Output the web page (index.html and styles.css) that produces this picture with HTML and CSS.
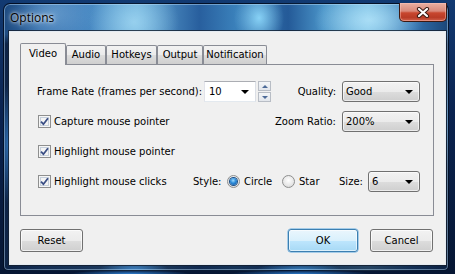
FILE: index.html
```html
<!DOCTYPE html>
<html>
<head>
<meta charset="utf-8">
<link rel="stylesheet" href="styles.css">
</head>
<body>
<div class="window">
  <div class="titlebar">
    <span class="title">Options</span>
    <div class="close">
      <svg width="14" height="11" viewBox="0 0 14 11">
        <path d="M3 2 L11 9 M11 2 L3 9" stroke="#3a1a14" stroke-width="4.2" stroke-linecap="round"/>
        <path d="M3 2 L11 9 M11 2 L3 9" stroke="#ffffff" stroke-width="2.2" stroke-linecap="round"/>
      </svg>
    </div>
  </div>
  <div class="client">
    <div class="tabs">
      <div class="tab tab-video selected">Video</div>
      <div class="tab tab-audio">Audio</div>
      <div class="tab tab-hotkeys">Hotkeys</div>
      <div class="tab tab-output">Output</div>
      <div class="tab tab-notif">Notification</div>
    </div>
    <div class="panel">
      <div class="row">
        <span class="fr-label">Frame Rate (frames per second):</span>
        <div class="editcombo"><span>10</span><i class="arrow"></i></div>
        <div class="spin">
          <div class="spin-btn"><i class="up"></i></div>
          <div class="spin-btn"><i class="down"></i></div>
        </div>
        <div class="right">
          <span class="rlabel">Quality:</span>
          <div class="combo combo-wide"><span>Good</span><i class="arrow"></i></div>
        </div>
      </div>
      <div class="row">
        <label class="check"><span class="cbox"><svg width="9" height="9" viewBox="0 0 9 9"><path d="M1 4.6 L3.4 7.2 L8 1.2" fill="none" stroke="#3b4f86" stroke-width="1.8"/></svg></span>Capture mouse pointer</label>
        <div class="right">
          <span class="rlabel">Zoom Ratio:</span>
          <div class="combo combo-wide"><span>200%</span><i class="arrow"></i></div>
        </div>
      </div>
      <div class="row">
        <label class="check"><span class="cbox"><svg width="9" height="9" viewBox="0 0 9 9"><path d="M1 4.6 L3.4 7.2 L8 1.2" fill="none" stroke="#3b4f86" stroke-width="1.8"/></svg></span>Highlight mouse pointer</label>
      </div>
      <div class="row">
        <label class="check check-fixed"><span class="cbox"><svg width="9" height="9" viewBox="0 0 9 9"><path d="M1 4.6 L3.4 7.2 L8 1.2" fill="none" stroke="#3b4f86" stroke-width="1.8"/></svg></span>Highlight mouse clicks</label>
        <span class="style-label">Style:</span>
        <label class="radio-opt circle-opt"><span class="radio on"></span>Circle</label>
        <label class="radio-opt star-opt"><span class="radio"></span>Star</label>
        <span class="size-label">Size:</span>
        <div class="combo combo-small"><span>6</span><i class="arrow"></i></div>
      </div>
    </div>
    <div class="buttons">
      <div class="btn btn-reset">Reset</div>
      <div class="btn btn-ok">OK</div>
      <div class="btn btn-cancel">Cancel</div>
    </div>
  </div>
</div>
</body>
</html>
```
FILE: styles.css
```css
* { box-sizing: border-box; }

html, body {
  margin: 0;
  width: 455px;
  height: 274px;
  overflow: hidden;
}

body {
  padding: 3px 0 0 3px;
  background:
    radial-gradient(ellipse 60px 4px at 130px 274px, #2f7fd0, transparent),
    radial-gradient(ellipse 70px 4px at 300px 274px, #2a78c8, transparent),
    linear-gradient(180deg, #123a72 0%, #0a2350 40%, #061633 100%);
  font-family: "DejaVu Sans", sans-serif;
  font-size: 10px;
  color: #000;
}

.window {
  width: 446px;
  height: 268px;
  border: 1px solid rgba(0, 10, 30, 0.85);
  border-radius: 7px 7px 5px 5px;
  padding: 0 2px 5px 5px;
  box-shadow: inset 0 0 0 1px rgba(190, 225, 250, 0.45);
  background:
    radial-gradient(ellipse 45px 40px at 130px 18px, rgba(160, 215, 242, 0.85), transparent),
    radial-gradient(ellipse 25px 30px at 255px 14px, rgba(140, 215, 250, 0.95), transparent),
    radial-gradient(ellipse 55px 30px at 365px 16px, rgba(175, 225, 248, 0.9), transparent),
    radial-gradient(ellipse 40px 30px at 50px 10px, rgba(120, 170, 215, 0.6), transparent),
    radial-gradient(ellipse 35px 14px at 130px 268px, rgba(70, 150, 225, 0.85), transparent),
    radial-gradient(ellipse 45px 10px at 295px 268px, rgba(70, 160, 235, 0.85), transparent),
    radial-gradient(ellipse 8px 60px at 4px 140px, rgba(60, 140, 220, 0.7), transparent),
    radial-gradient(ellipse 6px 60px at 446px 110px, rgba(60, 150, 230, 0.7), transparent),
    linear-gradient(180deg, transparent 0px, transparent 30px, rgba(5, 18, 45, 0.7) 40px, rgba(5, 18, 45, 0.7) 100%),
    linear-gradient(90deg, #1d4a80 0%, #376fab 8%, #4585c0 18%, #63a8d6 30%, #285f9e 44%, #3a80ba 52%, #245a98 64%, #4a94c8 72%, #72bae0 82%, #3373b0 92%, #1b4678 100%);
}

.titlebar {
  height: 27px;
  display: flex;
  align-items: flex-start;
}

.title {
  font-family: "Open Sans", sans-serif;
  font-size: 12px;
  line-height: 16px;
  margin: 6px 0 0 1px;
  color: #000;
  text-shadow: 0 0 6px rgba(255, 255, 255, 0.9), 0 0 3px rgba(255, 255, 255, 0.9);
}

.close {
  margin: -1px -1px 0 auto;
  width: 48px;
  height: 19px;
  border: 1px solid #3d1810;
  border-top: none;
  border-radius: 0 0 5px 5px;
  background: linear-gradient(180deg, #eab0a2 0%, #d9897a 45%, #c8472f 55%, #b83b26 80%, #d0614b 100%);
  box-shadow: inset 0 0 0 1px rgba(255, 200, 190, 0.45);
  display: flex;
  align-items: center;
  justify-content: center;
}

.client {
  height: 234px;
  background: #f0f0f0;
  border: 1px solid #e4ebf2;
  box-shadow: 0 0 0 1px rgba(20, 30, 45, 0.8);
  padding: 11px 0 0 10px;
}

.tabs {
  display: flex;
  align-items: flex-end;
  height: 21px;
  position: relative;
  z-index: 1;
}

.tab {
  height: 19px;
  border: 1px solid #898c95;
  border-bottom: none;
  border-radius: 2px 2px 0 0;
  background: linear-gradient(180deg, #f2f2f2 0%, #ebebeb 50%, #dddddd 51%, #cfcfcf 100%);
  text-align: center;
  line-height: 17px;
}

.tab.selected {
  height: 22px;
  margin-bottom: -1px;
  background: #f0f0f0;
  line-height: 19px;
}

.tab-video { width: 46px; }
.tab-audio { width: 40px; }
.tab-hotkeys { width: 51px; }
.tab-output { width: 46px; }
.tab-notif { width: 64px; }

.panel {
  width: 414px;
  height: 152px;
  border: 1px solid #898c95;
  background: #f0f0f0;
  padding: 16px 13px 0 16px;
  display: flex;
  flex-direction: column;
  gap: 9px;
}

.row {
  height: 21px;
  display: flex;
  align-items: center;
}

.fr-label { width: 167px; }

.editcombo {
  width: 52px;
  height: 21px;
  border: 1px solid #abadb3;
  border-color: #abadb3 #dbdfe6 #e3e9ef #e2e3ea;
  background: #fff;
  display: flex;
  align-items: center;
  padding-left: 4px;
  position: relative;
}

.arrow {
  position: absolute;
  right: 6px;
  top: 8px;
  width: 0;
  height: 0;
  border-left: 4px solid transparent;
  border-right: 4px solid transparent;
  border-top: 4px solid #000;
}

.spin {
  margin-left: 2px;
  display: flex;
  flex-direction: column;
  gap: 1px;
}

.spin-btn {
  width: 13px;
  height: 10px;
  border: 1px solid #b8bdc5;
  background: linear-gradient(180deg, #f4f6f8, #e2e6ec);
  display: flex;
  align-items: center;
  justify-content: center;
}

.spin-btn i {
  width: 0;
  height: 0;
  border-left: 3px solid transparent;
  border-right: 3px solid transparent;
}
.spin-btn .up { border-bottom: 3px solid #4d6b98; }
.spin-btn .down { border-top: 3px solid #4d6b98; }

.right {
  margin-left: auto;
  display: flex;
  align-items: center;
  gap: 6px;
}

.combo {
  height: 21px;
  border: 1px solid #707070;
  border-radius: 3px;
  background: linear-gradient(180deg, #f2f2f2 0%, #ebebeb 50%, #dddddd 51%, #cfcfcf 100%);
  box-shadow: inset 0 0 0 1px rgba(255, 255, 255, 0.6);
  display: flex;
  align-items: center;
  padding-left: 3px;
  position: relative;
}

.combo-wide { width: 78px; }
.combo-small { width: 52px; }

.check {
  display: flex;
  align-items: center;
  margin-left: 1px;
}

.check-fixed { width: 155px; }

.cbox {
  width: 13px;
  height: 13px;
  border: 1px solid #8e8f8f;
  background: #f4f4f4;
  margin-right: 3px;
  display: flex;
  align-items: center;
  justify-content: center;
  box-shadow: inset 0 0 0 1px #f6f6f6, inset 0 0 0 2px #c6d0dc;
}

.cbox svg { display: block; }

.style-label { width: 34px; }

.radio-opt {
  display: flex;
  align-items: center;
}

.circle-opt { width: 55px; }
.star-opt { width: 57px; }

.radio {
  width: 13px;
  height: 13px;
  border-radius: 50%;
  border: 1px solid #8e8f8f;
  background: radial-gradient(circle at 50% 40%, #ffffff 0%, #e6e6e6 60%, #cfcfcf 100%);
  margin-right: 4px;
  display: flex;
  align-items: center;
  justify-content: center;
}

.radio.on::after {
  content: "";
  width: 7px;
  height: 7px;
  border-radius: 50%;
  background: radial-gradient(circle at 45% 35%, #9fdcff 0%, #2b8ad8 45%, #0d4f9a 100%);
  box-shadow: 0 0 0 1px #1b4f86;
}

.size-label { width: 29px; }

.buttons {
  width: 414px;
  margin-top: 13px;
  display: flex;
}

.btn {
  height: 23px;
  border: 1px solid #707070;
  border-radius: 3px;
  background: linear-gradient(180deg, #f2f2f2 0%, #ebebeb 50%, #dddddd 51%, #cfcfcf 100%);
  box-shadow: inset 0 0 0 1px rgba(255, 255, 255, 0.7);
  display: flex;
  align-items: center;
  justify-content: center;
}

.btn-reset { width: 63px; }

.btn-ok {
  width: 70px;
  margin-left: auto;
  border-color: #3c7fb1;
  background: linear-gradient(180deg, #eaf6fd 0%, #d9f0fc 50%, #bee6fd 51%, #a7d9f5 100%);
  box-shadow: inset 0 0 0 1px rgba(255, 255, 255, 0.6), 0 0 0 0.5px #5aa7e0;
}

.btn-cancel {
  width: 63px;
  margin-left: 12px;
  margin-right: 1px;
}
```
